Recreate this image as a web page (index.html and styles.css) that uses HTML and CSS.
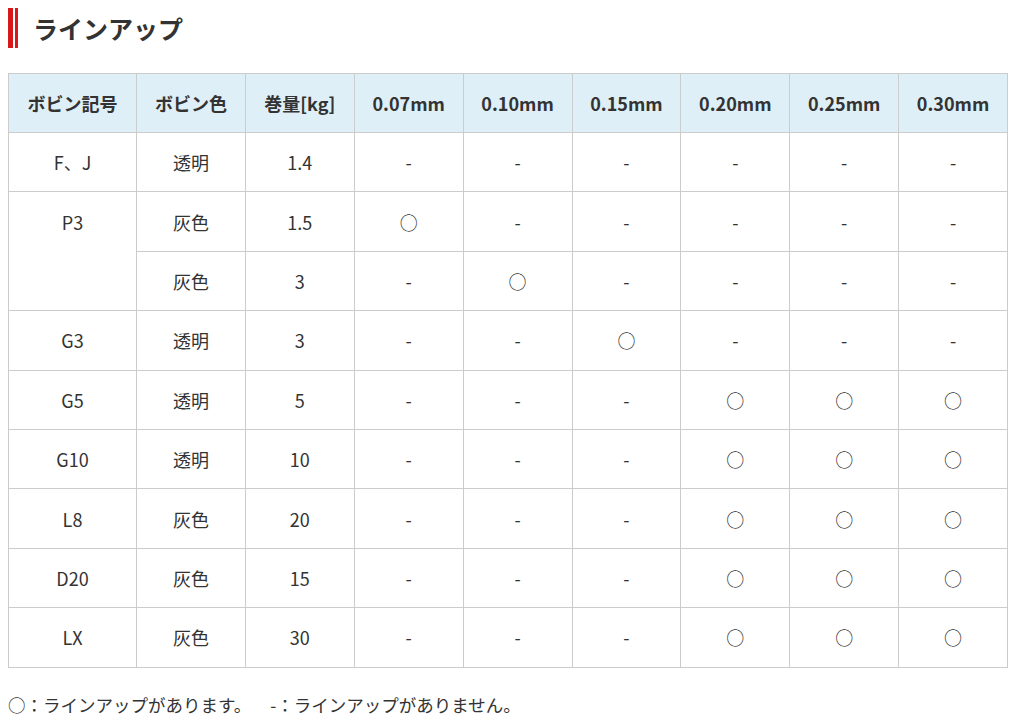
FILE: index.html
```html
<!DOCTYPE html>
<html lang="ja">
<head>
<meta charset="utf-8">
<link rel="stylesheet" href="styles.css">
</head>
<body>
<h2 class="title">ラインアップ</h2>
<table class="lineup">
<thead>
<tr><th class="c1">ボビン記号</th><th>ボビン色</th><th>巻量[kg]</th><th>0.07mm</th><th>0.10mm</th><th>0.15mm</th><th>0.20mm</th><th>0.25mm</th><th>0.30mm</th></tr>
</thead>
<tbody>
<tr><td>F、J</td><td>透明</td><td>1.4</td><td>-</td><td>-</td><td>-</td><td>-</td><td>-</td><td>-</td></tr>
<tr><td rowspan="2" class="top">P3</td><td>灰色</td><td>1.5</td><td>○</td><td>-</td><td>-</td><td>-</td><td>-</td><td>-</td></tr>
<tr><td>灰色</td><td>3</td><td>-</td><td>○</td><td>-</td><td>-</td><td>-</td><td>-</td></tr>
<tr><td>G3</td><td>透明</td><td>3</td><td>-</td><td>-</td><td>○</td><td>-</td><td>-</td><td>-</td></tr>
<tr><td>G5</td><td>透明</td><td>5</td><td>-</td><td>-</td><td>-</td><td>○</td><td>○</td><td>○</td></tr>
<tr><td>G10</td><td>透明</td><td>10</td><td>-</td><td>-</td><td>-</td><td>○</td><td>○</td><td>○</td></tr>
<tr><td>L8</td><td>灰色</td><td>20</td><td>-</td><td>-</td><td>-</td><td>○</td><td>○</td><td>○</td></tr>
<tr><td>D20</td><td>灰色</td><td>15</td><td>-</td><td>-</td><td>-</td><td>○</td><td>○</td><td>○</td></tr>
<tr><td>LX</td><td>灰色</td><td>30</td><td>-</td><td>-</td><td>-</td><td>○</td><td>○</td><td>○</td></tr>
</tbody>
</table>
<p class="note">○：ラインアップがあります。<span class="gap"></span>-：ラインアップがありません。</p>
</body>
</html>
```

FILE: styles.css
```css
html, body {
  margin: 0;
  padding: 0;
  background: #fff;
}
body {
  padding: 8px;
  font-family: "Noto Sans CJK JP", "Noto Sans", sans-serif;
  color: #333;
  font-size: 16px;
}
.title {
  position: relative;
  margin: 0;
  height: 40px;
  line-height: 40px;
  padding-left: 25px;
  font-size: 25px;
  font-weight: bold;
  color: #333;
}
.title::before {
  content: "";
  position: absolute;
  left: 0;
  top: 0;
  width: 5px;
  height: 40px;
  background: #d7191c;
}
.title::after {
  content: "";
  position: absolute;
  left: 7px;
  top: 0;
  width: 3px;
  height: 40px;
  background: #d7191c;
}
.lineup {
  margin-top: 25px;
  width: 1000px;
  border-collapse: collapse;
  table-layout: fixed;
}
.lineup th, .lineup td {
  border: 1px solid #cccccc;
  text-align: center;
  vertical-align: middle;
  padding: 0;
}
.lineup th {
  background: #dfeff7;
  height: 58px;
  font-size: 18px;
  font-weight: bold;
  color: #333;
}
.lineup th.c1 {
  width: 127px;
}
.lineup td {
  height: 58.4px;
  font-size: 18px;
  color: #333;
}
.lineup td.top {
  vertical-align: top;
  padding-top: 17px;
}
.note {
  margin: 24px 0 0;
  font-size: 17.5px;
  color: #333;
}
.note .gap {
  display: inline-block;
  width: 19px;
}
```
